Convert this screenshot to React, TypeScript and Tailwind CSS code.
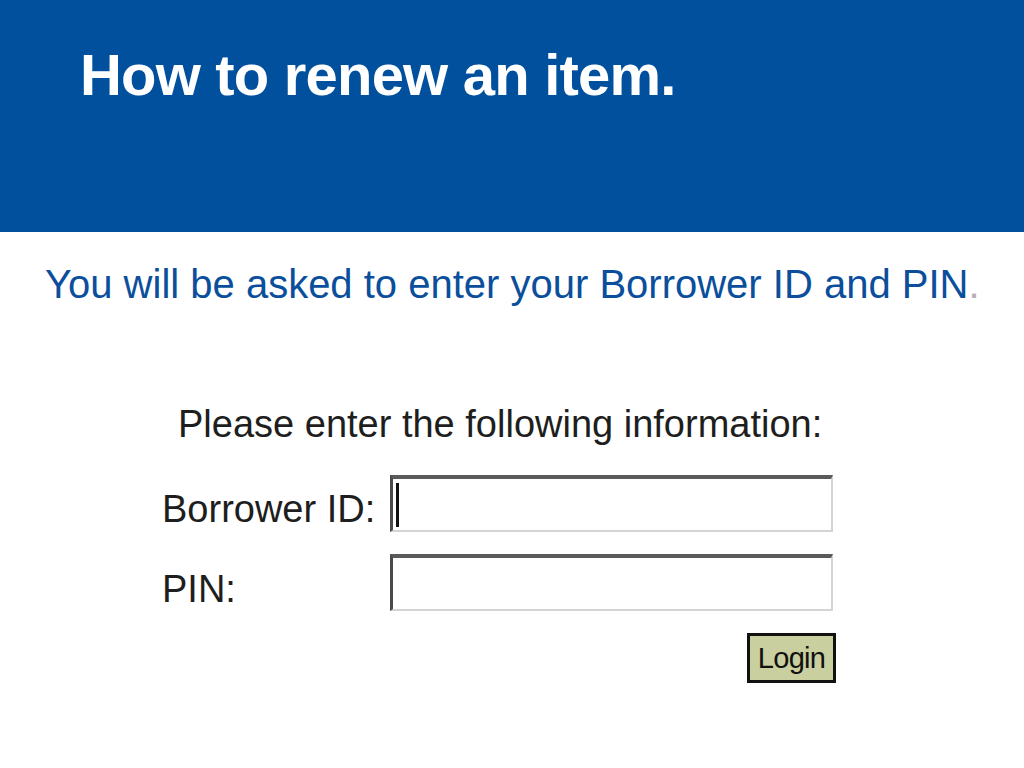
import React from 'react';

const fieldBox =
    'w-[443px] h-[57px] bg-white border-t-[4px] border-l-[3px] border-r-[2px] border-b-[2px] border-t-[#5a5a5a] border-l-[#4a4a4a] border-r-[#d4d4d4] border-b-[#d4d4d4]';

const App: React.FC = () => {
    return (
        <div className="w-[1024px] h-[768px] bg-white overflow-hidden font-['Liberation_Sans',Arial,sans-serif]">
            {/* slide title band */}
            <header className="h-[232px] bg-[#00509e] pl-[80px] pt-[46px]">
                <h1 className="text-[58px] leading-none font-bold text-white tracking-[-0.8px]">How to renew an item.</h1>
            </header>

            <p className="mt-[32px] pl-[45px] text-[40px] leading-none text-[#0b4f9c]">
                You will be asked to enter your Borrower ID and PIN<span className="text-[#b6adbf]">.</span>
            </p>

            {/* screenshot of the login form */}
            <div className="mt-[101px] ml-[150px] w-[700px] text-[#1e1e1e]">
                <div className="pl-[28px] text-[38px] leading-none">Please enter the following information:</div>

                <div className="mt-[32px] flex items-start">
                    <div className="w-[240px] pl-[12px] pt-[15px] text-[38px] leading-none">Borrower ID:</div>
                    <div className={`${fieldBox} flex items-center pl-[3px]`}>
                        <span className="block w-[3px] h-[44px] bg-[#111]" />
                    </div>
                </div>

                <div className="mt-[22px] flex items-start">
                    <div className="w-[240px] pl-[12px] pt-[16px] text-[38px] leading-none">PIN:</div>
                    <div className={fieldBox} />
                </div>

                <div className="mt-[22px] pl-[597px]">
                    <button className="w-[89px] h-[50px] border-[3px] border-[#111] bg-[#c9cf9e] text-[29px] leading-none text-[#111] tracking-tight">
                        Login
                    </button>
                </div>
            </div>
        </div>
    );
};

export default App;
